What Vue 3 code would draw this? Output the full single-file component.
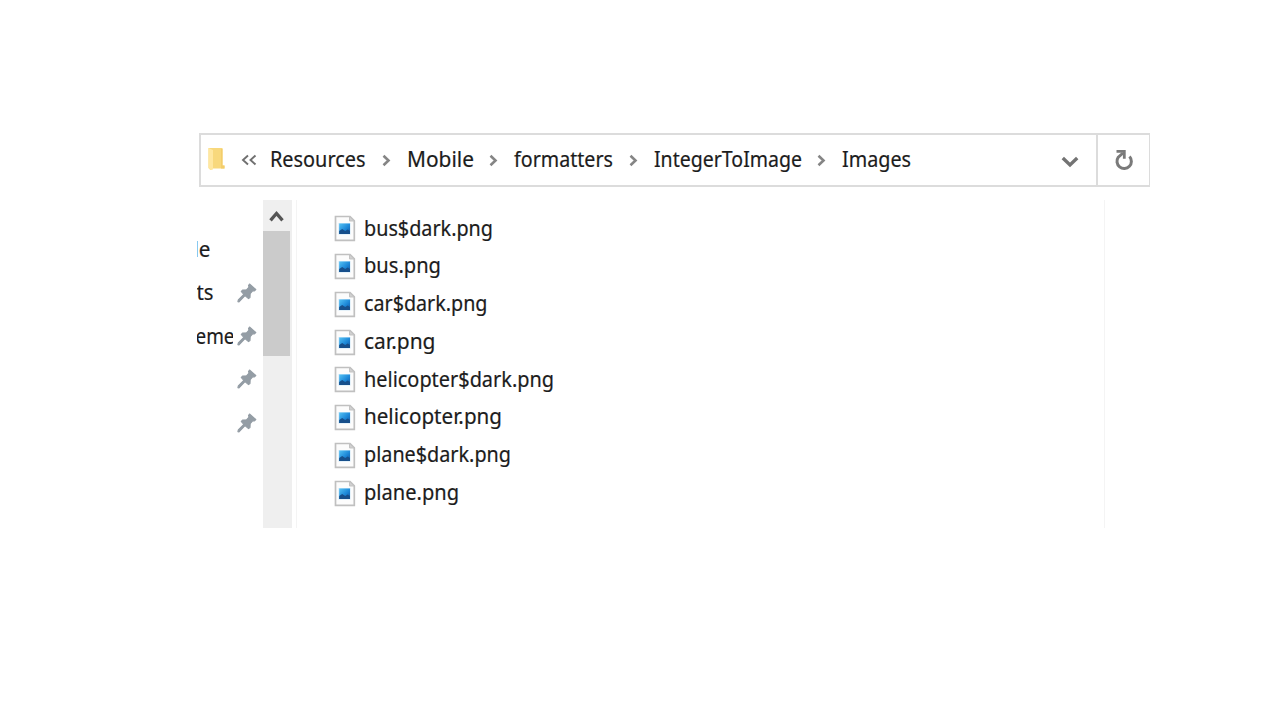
<script setup>
const crumbs = [
  { text: 'Resources', width: 95.5, after: 41 },
  { text: 'Mobile', width: 67, after: 40 },
  { text: 'formatters', width: 99, after: 41 },
  { text: 'IntegerToImage', width: 148, after: 40.5 },
  { text: 'Images', width: 69, after: 0 },
]
const files = [
  { name: 'bus$dark.png', width: 129 },
  { name: 'bus.png', width: 77 },
  { name: 'car$dark.png', width: 123.5 },
  { name: 'car.png', width: 71.5 },
  { name: 'helicopter$dark.png', width: 190 },
  { name: 'helicopter.png', width: 138 },
  { name: 'plane$dark.png', width: 147 },
  { name: 'plane.png', width: 95 },
]
const pinned = [
  { text: 'le', width: 17, x: -3.5, pin: false },
  { text: 'ts', width: 17, x: -0.5, pin: true },
  { text: 'eme', width: 39, x: -1.5, pin: true },
  { text: '', width: 0, x: 0, pin: true },
  { text: '', width: 0, x: 0, pin: true },
]
</script>

<template>
  <main class="page">
    <section class="explorer">
      <header class="address">
        <svg class="folder" width="18" height="24" viewBox="0 0 18 24">
          <path d="M.5 1H14.500V18.500H16.500V21.500H5L2.500 23 .5 21z" fill="#f8d87c" />
          <path d="M.5 1l4.500 2v19.500L2.500 23 .5 21z" fill="#ffe7a0" />
          <path d="M13 2h1.500v16.500h2v3h-3.500z" fill="#f3cd6b" />
        </svg>
        <svg class="back" width="16" height="12" viewBox="0 0 16 12">
          <path d="M7 1.500L2 6l5 4.500M14.500 1.500L9.500 6l5 4.500" fill="none" stroke="#707070" stroke-width="1.900" />
        </svg>
        <nav class="crumbs">
          <template v-for="c in crumbs" :key="c.text">
            <svg class="label" :width="c.width" height="30">
              <text x="0" y="22" :textLength="c.width" lengthAdjust="spacingAndGlyphs">{{ c.text }}</text>
            </svg>
            <span v-if="c.after" class="sep" :style="{ width: c.after + 'px' }">
              <svg width="9" height="13" viewBox="0 0 9 13">
                <path d="M1.500 1.800L6.500 6.500l-5 4.700" fill="none" stroke="#858585" stroke-width="2.600" />
              </svg>
            </span>
          </template>
        </nav>
        <svg class="drop" width="18" height="12" viewBox="0 0 18 12">
          <path d="M1.800 2L9 9l7.200-7" fill="none" stroke="#737373" stroke-width="3.400" />
        </svg>
        <div class="refresh">
          <svg width="20" height="22" viewBox="0 0 20 22">
            <path d="M15.500 7.500A7.200 7.200 0 1 1 4.300 8.200L9 4" fill="none" stroke="#7a7a7a" stroke-width="3" />
            <path d="M2.500 2.300H10.300V9.800" fill="none" stroke="#7a7a7a" stroke-width="2.800" />
          </svg>
        </div>
      </header>
      <div class="body">
        <aside class="sidebar">
          <div v-for="(p, i) in pinned" :key="i" class="place">
            <svg class="place-name" width="36" height="30">
              <text v-if="p.text" :x="p.x" y="23" :textLength="p.width" lengthAdjust="spacingAndGlyphs">{{ p.text }}</text>
            </svg>
            <svg v-if="p.pin" class="pin" width="20" height="20" viewBox="0 0 20 20">
              <path d="M12.500 1L18.800 6.500 17.200 8 15.800 7.700 13.200 10.700 13 14.500 11.500 15.600 8 12.700 2 18.900.9 18.600 1.300 17 6.800 11.300 4.200 8.500 5.500 7.100 9.500 6.800 12 4.200 11.500 2.500Z" fill="#949da5" stroke="#949da5" stroke-width="1.100" stroke-linejoin="round" />
            </svg>
          </div>
        </aside>
        <div class="scrollbar">
          <div class="up">
            <svg width="15" height="12" viewBox="0 0 15 12">
              <path d="M1.500 10.300L7.500 3.500l6 6.800" fill="none" stroke="#555" stroke-width="3.300" />
            </svg>
          </div>
          <div class="thumb"></div>
        </div>
        <ul class="files">
          <li v-for="f in files" :key="f.name">
            <svg class="file-icon" width="22" height="27" viewBox="0 0 22 27">
              <defs>
                <linearGradient id="sky" x1="0" y1="0" x2="1" y2="1">
                  <stop offset="0" stop-color="#55c2f4" />
                  <stop offset=".55" stop-color="#1d88d8" />
                  <stop offset="1" stop-color="#1354a0" />
                </linearGradient>
              </defs>
              <path d="M1.500 1.500H16L20.300 5.800V25.300H1.500Z" fill="#fcfcfc" stroke="#c0c0c0" stroke-width="1.700" />
              <path d="M15.500 1.500V6H20.300Z" fill="#d0d0d0" stroke="#c3c3c3" />
              <rect x="4.500" y="8" width="12" height="11.500" fill="#9fd4f5" opacity=".5" />
              <rect x="5.200" y="8.500" width="10.800" height="10.500" fill="url(#sky)" />
              <path d="M5.200 16l3-2 3 2 2.500-1.500 2.300 1.500v3H5.200z" fill="#174f8b" />
            </svg>
            <svg class="label" :width="f.width" height="30">
              <text x="0" y="22" :textLength="f.width" lengthAdjust="spacingAndGlyphs">{{ f.name }}</text>
            </svg>
          </li>
        </ul>
      </div>
    </section>
  </main>
</template>

<style>
body { background: #fff; }
</style>

<style scoped>
.page { box-sizing: border-box; width: 1280px; height: 720px; padding: 133px 0 0 197px; overflow: hidden; font-family: "Noto Sans", "Open Sans", sans-serif; }
.explorer { width: 953px; height: 395px; }
svg { display: block; flex: none; }
text { font-size: 21.5px; fill: #1c1c1c; stroke: #1c1c1c; stroke-width: 0.2px; }
.label { overflow: visible; }
.address { box-sizing: border-box; display: flex; align-items: center; height: 54px; margin-left: 2px; border: 2px solid #dcdcdc; border-right-width: 1px; }
.folder { margin: -3px 0 0 7px; }
.back { margin: -1px 0 0 15px; }
.crumbs { display: flex; align-items: center; flex: 1; margin: 0 0 0 13px; }
.sep { display: flex; justify-content: center; padding-top: 1px; }
.drop { margin: 3px 17px 0 0; }
.refresh { box-sizing: border-box; display: flex; align-items: center; justify-content: center; width: 53px; height: 50px; border-left: 2px solid #dcdcdc; }
.body { display: flex; height: 328px; margin-top: 13px; }
.sidebar { width: 66px; padding-top: 28px; box-sizing: border-box; }
.place { display: flex; align-items: center; height: 43.25px; }
.place-name { overflow: hidden; margin-top: -1px; }
.pin { margin: 0 0 0 4px; }
.scrollbar { width: 29px; background: #efefef; }
.up { display: flex; align-items: center; justify-content: center; height: 31px; width: 27px; }
.thumb { width: 27px; height: 125px; background: #cbcbcb; }
.files { box-sizing: border-box; flex: none; width: 809px; margin: 0 0 0 4px; padding: 10px 0 0 37px; list-style: none; border: solid #f4f4f4; border-width: 0 1px; }
.files li { display: flex; align-items: center; height: 37.75px; }
.files .label { margin: -0.5px 0 0 7.5px; }
</style>
